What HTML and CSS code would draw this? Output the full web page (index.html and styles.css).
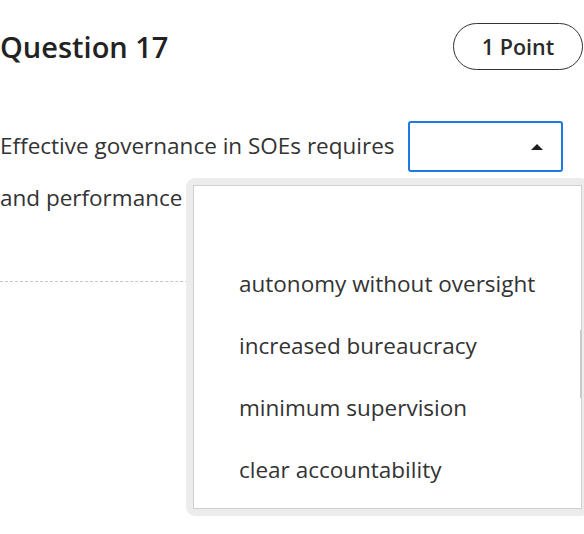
FILE: index.html
```html
<!DOCTYPE html>
<html lang="en">
<head>
<meta charset="utf-8">
<title>Question 17</title>
<link rel="stylesheet" href="styles.css">
</head>
<body>
<div class="page">
  <div class="header">
    <h1 class="title">Question 17</h1>
    <span class="badge">1 Point</span>
  </div>
  <p class="prompt">Effective governance in SOEs requires <span class="select"><span class="arrow"></span></span><br>and performance reporting.</p>
  <div class="divider"></div>

  <div class="dropdown">
    <ul class="options">
      <li class="option"></li>
      <li class="option">autonomy without oversight</li>
      <li class="option">increased bureaucracy</li>
      <li class="option">minimum supervision</li>
      <li class="option">clear accountability</li>
    </ul>
    <span class="thumb"></span>
  </div>
</div>
</body>
</html>
```
FILE: styles.css
```css
html, body {
  margin: 0;
  padding: 0;
  overflow: hidden;
  background: #fff;
}
body {
  font-family: "Open Sans", "Noto Sans", sans-serif;
  color: #2b2b2b;
  width: 584px;
  height: 534px;
}
.page {
  position: relative;
  padding-top: 23px;
}
.header {
  display: flex;
  justify-content: space-between;
  align-items: center;
  height: 47px;
}
.title {
  margin: 0;
  font-size: 29px;
  font-weight: 600;
  color: #222;
}
.badge {
  box-sizing: border-box;
  height: 47px;
  width: 130px;
  margin-right: 1px;
  border: 1px solid #333;
  border-radius: 24px;
  display: flex;
  align-items: center;
  justify-content: center;
  font-size: 21.5px;
  font-weight: 600;
  color: #2a2a2a;
}
.prompt {
  margin: 51px 0 0 0;
  font-size: 22.5px;
  line-height: 50px;
  color: #333;
  white-space: nowrap;
}
.select {
  display: inline-block;
  box-sizing: border-box;
  width: 155px;
  height: 51px;
  margin-left: 8px;
  vertical-align: middle;
  border: 2px solid #1f7ae0;
  border-radius: 3px;
  position: relative;
  top: -1px;
}
.arrow {
  position: absolute;
  right: 18px;
  top: 21px;
  width: 0;
  height: 0;
  border-left: 6px solid transparent;
  border-right: 6px solid transparent;
  border-bottom: 6px solid #1e1e1e;
}
.divider {
  margin-top: 58px;
  border-top: 1px dashed #c4c4c4;
}
.dropdown {
  position: absolute;
  left: 186px;
  top: 178px;
  width: 389px;
  border: 7px solid #ececec;
  border-radius: 9px;
  background: #ececec;
}
.options {
  list-style: none;
  margin: 0;
  padding: 5px 0 7px 0;
  background: #fff;
  border: 1px solid #cfcfcf;
}
.option {
  height: 62px;
  line-height: 62px;
  padding-left: 45px;
  font-size: 22.5px;
  color: #333;
}
.thumb {
  position: absolute;
  right: 0;
  top: 145px;
  width: 2px;
  height: 68px;
  background: #c9c9c9;
}
```
